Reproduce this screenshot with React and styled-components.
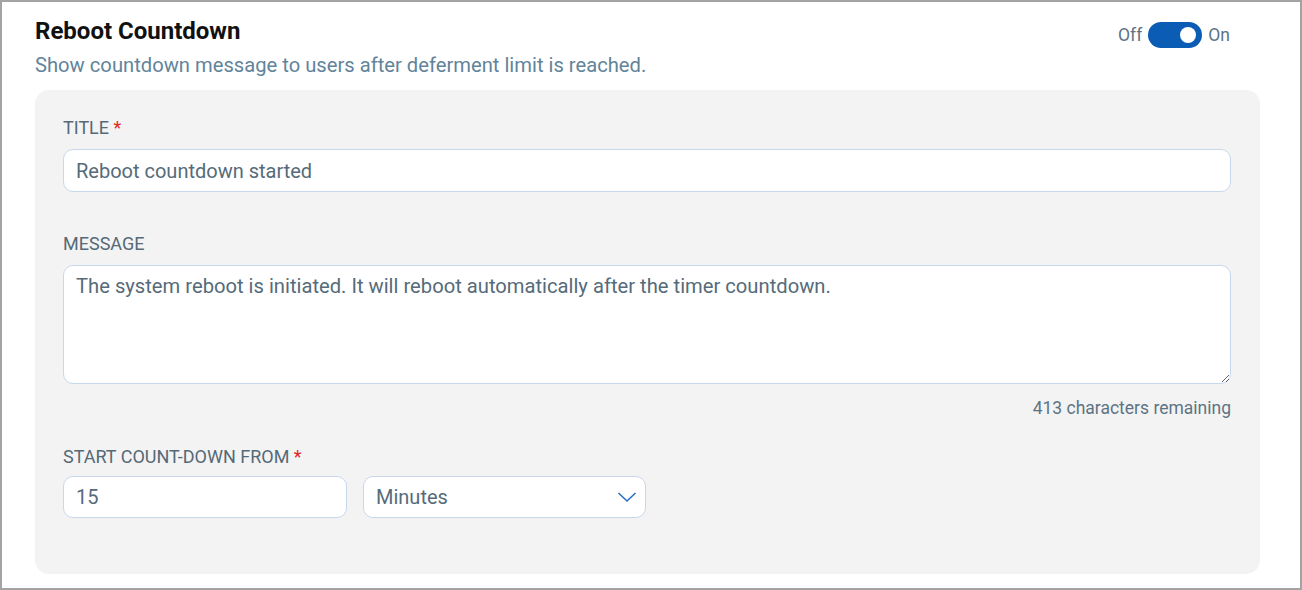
import React from 'react';
import styled, { createGlobalStyle } from 'styled-components';

const GlobalStyle = createGlobalStyle`
  html, body {
    margin: 0;
    padding: 0;
    background: #ffffff;
    font-family: Roboto, 'Liberation Sans', sans-serif;
  }
  * {
    box-sizing: border-box;
  }
`;

const Frame = styled.div`
  width: 1302px;
  height: 590px;
  border: 2px solid #a3a3a3;
  padding: 15px 40px 0 33px;
  background: #ffffff;
`;

const Header = styled.div`
  display: flex;
  justify-content: space-between;
  align-items: flex-start;
`;

const Title = styled.h2`
  margin: 0;
  font-size: 24px;
  line-height: 28px;
  font-weight: 700;
  color: #111111;
`;

const Subtitle = styled.p`
  margin: 7px 0 0;
  font-size: 20.2px;
  line-height: 26px;
  color: #62849a;
`;

const ToggleGroup = styled.div`
  display: flex;
  align-items: center;
  gap: 6px;
  margin: 5px 30px 0 0;
  font-size: 17.5px;
  color: #5b7385;
`;

const Switch = styled.button`
  position: relative;
  width: 54px;
  height: 26px;
  border: none;
  border-radius: 13px;
  background: ${(p) => (p.$on ? '#0b5cb5' : '#b7c2cc')};
  padding: 0;
  cursor: pointer;

  &::after {
    content: '';
    position: absolute;
    top: 5px;
    left: ${(p) => (p.$on ? '32px' : '6px')};
    width: 16px;
    height: 16px;
    border-radius: 50%;
    background: #ffffff;
  }
`;

const Card = styled.div`
  margin-top: 12px;
  background: #f3f3f3;
  border-radius: 14px;
  padding: 28px 29px 56px 28px;
`;

const Label = styled.div`
  font-size: 18px;
  line-height: 20px;
  color: #556977;
  text-transform: uppercase;
  margin-top: ${(p) => p.$gap || 0}px;

  span {
    color: #e0281f;
  }
`;

const fieldStyle = `
  display: block;
  width: 100%;
  border: 1px solid #c7d8ec;
  border-radius: 10px;
  background: #ffffff;
  font-family: Roboto, 'Liberation Sans', sans-serif;
  font-size: 20px;
  color: #566b79;
  outline: none;
`;

const Input = styled.input`
  ${fieldStyle}
  height: ${(p) => p.$h || 43}px;
  margin-top: 11px;
  padding: 0 12px;
`;

const TextArea = styled.textarea`
  ${fieldStyle}
  height: 119px;
  margin-top: 11px;
  padding: 8px 12px;
  line-height: 24px;
  font-size: 20.2px;
  resize: vertical;
`;

const Counter = styled.div`
  margin-top: 14px;
  text-align: right;
  font-size: 17.5px;
  line-height: 20px;
  color: #5d7384;
`;

const Row = styled.div`
  display: flex;
  gap: 16px;
  margin-top: -1px;
`;

const NumberBox = styled(Input)`
  width: 284px;
  margin-top: 10px;
`;

const SelectBox = styled.div`
  ${fieldStyle}
  width: 283px;
  height: 42px;
  margin-top: 10px;
  padding: 0 8px 0 12px;
  display: flex;
  align-items: center;
  justify-content: space-between;
`;

function Chevron() {
  return (
    <svg width="20" height="12" viewBox="0 0 20 12" fill="none">
      <path d="M1.5 2 L10 10 L18.5 2" stroke="#2a6fc0" strokeWidth="1.6" />
    </svg>
  );
}

export default function App() {
  return (
    <>
      <GlobalStyle />
      <Frame>
        <Header>
          <div>
            <Title>Reboot Countdown</Title>
            <Subtitle>Show countdown message to users after deferment limit is reached.</Subtitle>
          </div>
          <ToggleGroup>
            Off
            <Switch $on />
            On
          </ToggleGroup>
        </Header>
        <Card>
          <Label>
            Title <span>*</span>
          </Label>
          <Input defaultValue="Reboot countdown started" />
          <Label $gap={42}>Message</Label>
          <TextArea defaultValue="The system reboot is initiated. It will reboot automatically after the timer countdown." />
          <Counter>413 characters remaining</Counter>
          <Label $gap={29}>
            Start count-down from <span>*</span>
          </Label>
          <Row>
            <NumberBox $h={42} defaultValue="15" />
            <SelectBox>
              Minutes
              <Chevron />
            </SelectBox>
          </Row>
        </Card>
      </Frame>
    </>
  );
}
